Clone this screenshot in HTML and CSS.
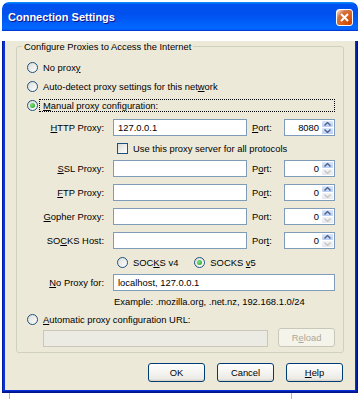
FILE: index.html
```html
<!DOCTYPE html>
<html lang="en">
  <head>
    <meta charset="UTF-8" />
    <title>Connection Settings</title>
    <link rel="stylesheet" href="styles.css">
  </head>

  <body>
    <div class="window">
      <div class="titlebar">
        <span class="title">Connection Settings</span>
        <span class="close">
          <svg width="9" height="9" viewBox="0 0 9 9">
            <path d="M1 1 L8 8 M8 1 L1 8" stroke="#fff" stroke-width="2" fill="none" />
          </svg>
        </span>
      </div>

      <div class="frame">
        <div class="dialog">
          <fieldset class="group">
            <legend>Configure Proxies to Access the Internet</legend>

            <div class="choice"><span class="radio"></span><span>No prox<u>y</u></span></div>
            <div class="choice"><span class="radio"></span><span>Auto-detect proxy settings for this net<u>w</u>ork</span></div>
            <div class="choice"><span class="radio on"></span><span class="focus"><u>M</u>anual proxy configuration:</span></div>

            <div class="proxies">
              <span class="lbl"><u>H</u>TTP Proxy:</span>
              <div class="field">127.0.0.1</div>
              <span class="port-lbl"><u>P</u>ort:</span>
              <div class="spin">
                <span class="num">8080</span>
                <span class="arrows">
                  <span class="up"><svg width="7" height="4" viewBox="0 0 7 4"><path d="M0.5 3.5 L3.5 0.5 L6.5 3.5" /></svg></span>
                  <span class="down"><svg width="7" height="4" viewBox="0 0 7 4"><path d="M0.5 0.5 L3.5 3.5 L6.5 0.5" /></svg></span>
                </span>
              </div>

              <div class="check-row"><span class="checkbox"></span><span>Use this proxy server for all protocols</span></div>

              <span class="lbl"><u>S</u>SL Proxy:</span>
              <div class="field"></div>
              <span class="port-lbl">P<u>o</u>rt:</span>
              <div class="spin">
                <span class="num">0</span>
                <span class="arrows">
                  <span class="up"><svg width="7" height="4" viewBox="0 0 7 4"><path d="M0.5 3.5 L3.5 0.5 L6.5 3.5" /></svg></span>
                  <span class="down off"><svg width="7" height="4" viewBox="0 0 7 4"><path d="M0.5 0.5 L3.5 3.5 L6.5 0.5" /></svg></span>
                </span>
              </div>

              <span class="lbl"><u>F</u>TP Proxy:</span>
              <div class="field"></div>
              <span class="port-lbl">Po<u>r</u>t:</span>
              <div class="spin">
                <span class="num">0</span>
                <span class="arrows">
                  <span class="up"><svg width="7" height="4" viewBox="0 0 7 4"><path d="M0.5 3.5 L3.5 0.5 L6.5 3.5" /></svg></span>
                  <span class="down off"><svg width="7" height="4" viewBox="0 0 7 4"><path d="M0.5 0.5 L3.5 3.5 L6.5 0.5" /></svg></span>
                </span>
              </div>

              <span class="lbl"><u>G</u>opher Proxy:</span>
              <div class="field"></div>
              <span class="port-lbl">Port:</span>
              <div class="spin">
                <span class="num">0</span>
                <span class="arrows">
                  <span class="up"><svg width="7" height="4" viewBox="0 0 7 4"><path d="M0.5 3.5 L3.5 0.5 L6.5 3.5" /></svg></span>
                  <span class="down off"><svg width="7" height="4" viewBox="0 0 7 4"><path d="M0.5 0.5 L3.5 3.5 L6.5 0.5" /></svg></span>
                </span>
              </div>

              <span class="lbl">SO<u>C</u>KS Host:</span>
              <div class="field"></div>
              <span class="port-lbl">Por<u>t</u>:</span>
              <div class="spin">
                <span class="num">0</span>
                <span class="arrows">
                  <span class="up"><svg width="7" height="4" viewBox="0 0 7 4"><path d="M0.5 3.5 L3.5 0.5 L6.5 3.5" /></svg></span>
                  <span class="down off"><svg width="7" height="4" viewBox="0 0 7 4"><path d="M0.5 0.5 L3.5 3.5 L6.5 0.5" /></svg></span>
                </span>
              </div>

              <div class="socks-row">
                <span class="socks"><span class="radio"></span><span>SOC<u>K</u>S v4</span></span>
                <span class="socks"><span class="radio on"></span><span>SOCKS <u>v</u>5</span></span>
              </div>

              <span class="lbl"><u>N</u>o Proxy for:</span>
              <div class="field wide">localhost, 127.0.0.1</div>

              <div class="example">Example: .mozilla.org, .net.nz, 192.168.1.0/24</div>
            </div>

            <div class="choice auto"><span class="radio"></span><span><u>A</u>utomatic proxy configuration URL:</span></div>

            <div class="url-row">
              <div class="field disabled"></div>
              <button class="btn off">R<u>e</u>load</button>
            </div>
          </fieldset>

          <div class="actions">
            <button class="btn">OK</button>
            <button class="btn">Cancel</button>
            <button class="btn"><u>H</u>elp</button>
          </div>
        </div>
      </div>
    </div>
    <div class="below"></div>
  </body>
</html>
```

FILE: styles.css
```css
* {
  margin: 0;
  padding: 0;
  box-sizing: border-box;
}

body {
  width: 359px;
  height: 400px;
  overflow: hidden;
  background-color: #fff;
  font-family: "Liberation Sans", Arial, sans-serif;
  font-size: 9.4px;
  color: #000;
}

.window {
  width: 356px;
  margin: 2px 1px 0 2px;
}

.titlebar {
  height: 29px;
  display: flex;
  align-items: center;
  justify-content: space-between;
  padding: 0 5px 0 6px;
  border-radius: 7px 7px 0 0;
  background: linear-gradient(
    180deg,
    #0997ff,
    #0053ee 8%,
    #0050ee 40%,
    #0066ff 88%,
    #0066ff 93%,
    #005bff 95%,
    #003dd7 96%,
    #003dd7
  );
}

.title {
  color: #fff;
  font: bold 11px "Liberation Sans", Arial, sans-serif;
  text-shadow: 1px 1px #0f1089;
}

.close {
  width: 17px;
  height: 17px;
  margin-top: 1px;
  border: 1px solid #fff;
  border-radius: 3px;
  display: flex;
  align-items: center;
  justify-content: center;
  background: radial-gradient(
    circle at 90% 90%,
    #cc4600 0%,
    #dc6527 55%,
    #cd7546 70%,
    #ffccb2 90%,
    #fff 100%
  );
}

.frame {
  background-color: #0831d9;
  padding: 0 3px 3px;
  box-shadow: inset -1px -1px #00138c, inset 1px 0 #001ea0, inset -2px -2px #001ea0;
}

.dialog {
  background-color: #ece9d8;
  padding-bottom: 8px;
}

/* group box */
.group {
  margin: 10px 11px 0;
  border: 1px solid #d0d0bf;
  border-radius: 3px;
  padding: 6px 8px 5px 10px;
}

.group legend {
  margin-left: -5px;
  padding: 0 2px;
  line-height: 11px;
}

.choice {
  height: 19px;
  display: flex;
  align-items: center;
}

.choice.auto {
  height: 16px;
}

.radio {
  width: 11px;
  height: 11px;
  margin-right: 5px;
  border: 1px solid #1c5180;
  border-radius: 50%;
  background: linear-gradient(135deg, #dcdcd7, #fff);
  display: flex;
  align-items: center;
  justify-content: center;
  flex-shrink: 0;
}

.radio.on::after {
  content: "";
  width: 5px;
  height: 5px;
  border-radius: 50%;
  background: radial-gradient(circle at 35% 35%, #7be07a, #21a121);
}

.focus {
  flex: 1;
  margin-left: -4px;
  padding-left: 3px;
  height: 13px;
  line-height: 11px;
  border: 1px dotted #000;
}

.checkbox {
  width: 11px;
  height: 11px;
  margin-right: 5px;
  border: 1px solid #1c5180;
  background: linear-gradient(135deg, #dcdcd7, #fff);
}

/* proxy fields */
.proxies {
  margin-top: 4px;
  display: grid;
  grid-template-columns: 86px 134px 37px 51px;
  grid-template-rows: 17px 24px 24px 24px 24px 18px 24px 17px 20px;
  align-items: start;
}

.lbl {
  height: 17px;
  line-height: 17px;
  padding-right: 9px;
  text-align: right;
  white-space: nowrap;
}

.port-lbl {
  height: 17px;
  line-height: 17px;
  padding-left: 5px;
}

.field {
  height: 17px;
  border: 1px solid #7f9db9;
  background-color: #fff;
  padding-left: 4px;
  line-height: 15px;
}

.field.wide {
  grid-column: 2 / 5;
}

.field.disabled {
  width: 225px;
  border-color: #c9c7ba;
  background-color: #ebebe4;
}

.spin {
  height: 17px;
  display: flex;
  border: 1px solid #7f9db9;
  background-color: #fff;
}

.spin .num {
  flex: 1;
  text-align: right;
  padding-right: 2px;
  line-height: 15px;
}

.arrows {
  width: 13px;
  padding: 1px;
  display: flex;
  flex-direction: column;
  gap: 1px;
}

.arrows span {
  flex: 1;
  display: flex;
  align-items: center;
  justify-content: center;
  border-radius: 1px;
  background: linear-gradient(180deg, #dce7fd, #b9cdf6);
}

.arrows path {
  fill: none;
  stroke: #4d6185;
  stroke-width: 1.4;
}

.arrows .off {
  background: linear-gradient(180deg, #f3f4f8, #e4e8f1);
}

.arrows .off path {
  stroke: #c9c7ba;
}

.check-row {
  grid-column: 2 / 5;
  align-self: center;
  display: flex;
  align-items: center;
  padding-left: 4px;
}

.socks-row {
  grid-column: 2 / 5;
  align-self: center;
  display: flex;
  gap: 16px;
  padding-left: 4px;
}

.socks {
  display: flex;
  align-items: center;
}

.example {
  grid-column: 2 / 5;
  align-self: center;
  padding-left: 1px;
}

.url-row {
  height: 20px;
  display: flex;
  align-items: flex-end;
  justify-content: space-between;
  padding-left: 16px;
}

/* buttons */
.btn {
  width: 57px;
  height: 19px;
  font: inherit;
  color: #000;
  border: 1px solid #003c74;
  border-radius: 3px;
  background: linear-gradient(180deg, #fff, #ecebe6 86%, #d6d0c5);
}

.btn.off {
  color: #aca899;
  border-color: #c9c7ba;
  background: #f5f4ea;
}

.actions {
  margin-top: 10px;
  padding-right: 12px;
  display: flex;
  justify-content: flex-end;
  gap: 12px;
}

.below {
  width: 283px;
  height: 6px;
  margin-left: 9px;
  border-left: 1px solid #b5b5b5;
  border-right: 1px solid #b5b5b5;
}
```
